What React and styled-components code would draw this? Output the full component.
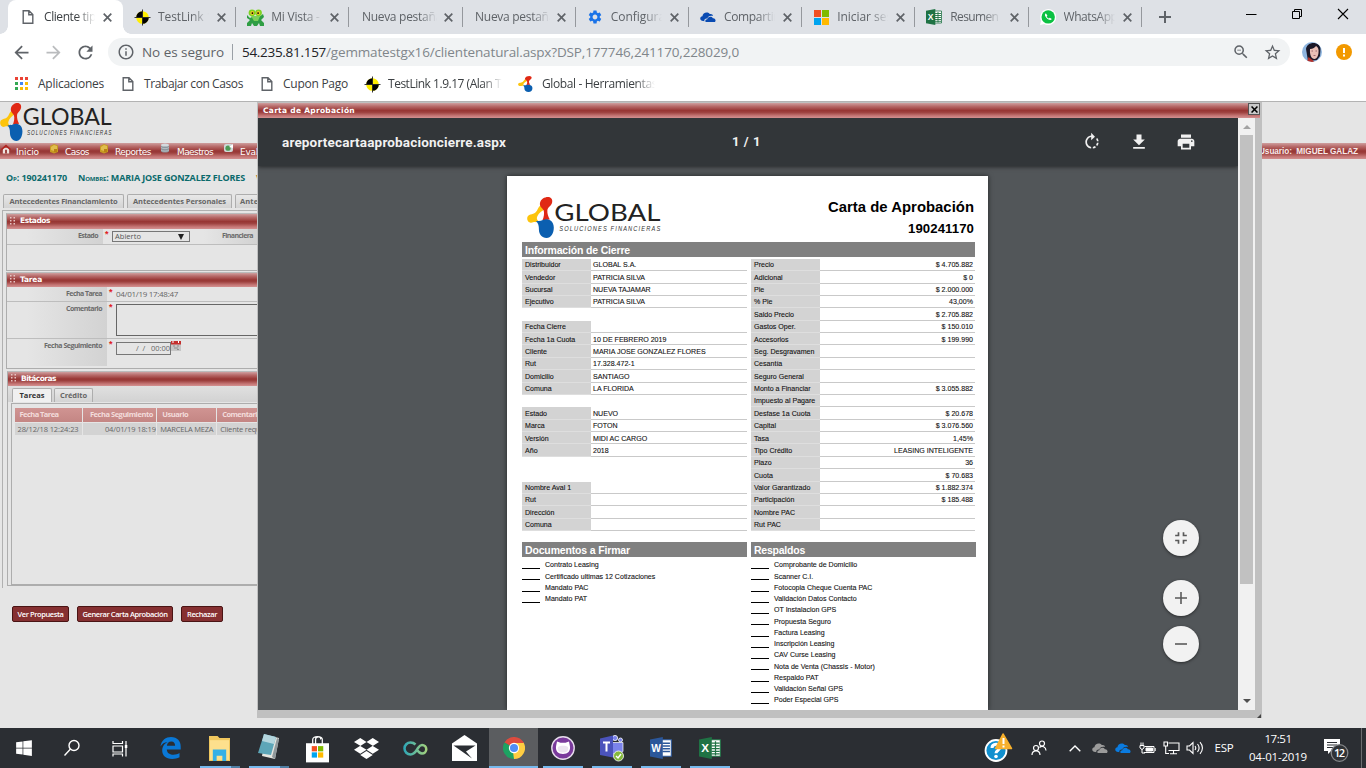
import React, { useLayoutEffect, useRef, useState } from "react";
import styled, { createGlobalStyle, css } from "styled-components";
import {
  MdArrowBack, MdArrowForward, MdRefresh, MdInfoOutline, MdZoomOut, MdStarBorder,
  MdRotateRight, MdPrint, MdFileDownload, MdFullscreenExit, MdSettings,
} from "react-icons/md";
import { FaDropbox, FaWindows } from "react-icons/fa";

const Global = createGlobalStyle`
  * { box-sizing: border-box; }
  body { margin: 0; overflow: hidden; font-family: "Open Sans", "Noto Sans", sans-serif; }
  svg { display: block; flex: none; }
`;

const ui = '"Open Sans", "Noto Sans", sans-serif';
const verdana = '"DejaVu Sans", sans-serif';
const arial = '"Liberation Sans", sans-serif';

const TextSpan = styled.span`
  display: inline-block;
  flex: none;
  white-space: pre;
  font-family: ${(p) => p.$font || ui};
  font-size: ${(p) => p.$size}px;
  font-weight: ${(p) => p.$weight || 400};
  color: ${(p) => p.$color || "#3c4043"};
  line-height: 1.2;
  ${(p) => p.$caps && css`font-variant: small-caps;`}
  ${(p) => p.$ink && css`-webkit-text-stroke: ${p.$ink}px currentColor;`}
`;

/* Text whose tracking is adjusted so that it spans a given width. */
function Text({ w, size = 12, weight, color, font, caps, ink, children }) {
  const ref = useRef(null);
  const [track, setTrack] = useState(0);
  useLayoutEffect(() => {
    if (!w) return;
    const natural = ref.current.getBoundingClientRect().width;
    setTrack((w - natural) / String(children).length);
  }, []);
  return (
    <TextSpan ref={ref} $size={size} $weight={weight} $color={color} $font={font} $caps={caps} $ink={ink}
      style={track ? { letterSpacing: track } : undefined}>
      {children}
    </TextSpan>
  );
}

const Screen = styled.div`
  width: 1366px; height: 768px; overflow: hidden;
  display: flex; flex-direction: column; background: #fff;
`;

/* ---------- browser chrome ---------- */
const TabStrip = styled.div`
  height: 34px; flex: none; display: flex; background: #dee1e6; padding-left: 8px;
`;
const Tab = styled.div`
  width: ${(p) => (p.$active ? 115 : 113.2)}px; flex: none; height: 34px;
  display: flex; align-items: center; padding-left: ${(p) => (p.$active ? 12 : 11)}px;
  background: ${(p) => (p.$active ? "#fff" : "transparent")};
  border-radius: 8px 8px 0 0; position: relative;
  &::before {
    content: ""; display: ${(p) => (p.$active ? "block" : "none")};
    position: absolute; left: -8px; bottom: 0; width: 8px; height: 8px;
    background: radial-gradient(circle at 0 0, #dee1e6 7.5px, #fff 8px);
  }
  &::after {
    content: ""; position: absolute;
    ${(p) => p.$active
      ? css`right: -8px; bottom: 0; width: 8px; height: 8px; background: radial-gradient(circle at 100% 0, #dee1e6 7.5px, #fff 8px);`
      : css`right: 0; top: 7px; width: 1px; height: 20px; background: #95989d;`}
  }
`;
const TabIcon = styled.div`width: 16px; margin-right: 8px; display: flex; justify-content: center;`;
const TabTitle = styled.div`
  width: ${(p) => (p.$wide ? 75 : 51)}px; overflow: hidden; display: flex;
  margin-left: ${(p) => (p.$wide ? 1.5 : 0)}px;
  mask-image: linear-gradient(90deg, #000 calc(100% - 18px), transparent);
`;
const TabClose = styled.div`flex: 1; display: flex; justify-content: flex-end; padding-right: ${(p) => (p.$active ? 11 : 10)}px;`;
const NewTab = styled.div`width: 47px; display: flex; align-items: center; justify-content: center;`;
const WindowButtons = styled.div`flex: 1; display: flex; justify-content: flex-end; padding: 8px 17px 0 0; gap: 34px;`;

const Toolbar = styled.div`height: 36px; flex: none; display: flex; align-items: center; color: #5f6368;`;
const NavButtons = styled.div`width: 108px; display: flex; padding-left: 11px; gap: 11px;`;
const AddressBar = styled.div`
  width: 1182px; height: 28px; border-radius: 14px; background: #f1f3f4;
  display: flex; align-items: center; padding: 0 8px 0 9px;
`;
const SiteInfo = styled.div`width: 25px; flex: none;`;
const Divider = styled.div`width: 1px; height: 16px; background: #9aa0a6; margin: 0 9px 0 8px;`;
const AddressTools = styled.div`flex: 1; display: flex; justify-content: flex-end; align-items: center; gap: 13px;`;
const Avatar = styled.div`margin-left: 12px; margin-right: 14px;`;

const Bookmarks = styled.div`height: 31px; flex: none; display: flex; align-items: center; padding: 0 0 3px 15px;`;
const Bookmark = styled.div`
  display: flex; align-items: center; width: ${(p) => p.$w}px; flex: none;
`;
const BookmarkIcon = styled.div`width: ${(p) => p.$w || 22}px; flex: none;`;
const Fade = styled.div`display: flex; overflow: hidden; width: ${(p) => p.$w}px; mask-image: linear-gradient(90deg, #000 calc(100% - 20px), transparent);`;

/* ---------- web page ---------- */
const redBar = css`background: linear-gradient(#cf9f9f 0%, #b76a69 22%, #983634 50%, #9d403e 62%, #c57675 85%, #d39090 100%);`;

const Page = styled.div`
  height: 627px; flex: none; display: flex; background: #e5e5e5; border-top: 1px solid #b3b3b3;
`;
const AppPane = styled.div`width: 257px; flex: none; overflow: hidden; display: flex; flex-direction: column;`;
const LogoRow = styled.div`height: 41px; flex: none; padding-top: 1px;`;
const MenuBar = styled.div`
  ${redBar} height: 16px; flex: none; display: flex; align-items: center; padding-left: 1px;
`;
const MenuItem = styled.div`
  width: ${(p) => p.$w}px; flex: none; height: 16px; display: flex; align-items: flex-start; gap: ${(p) => p.$gap || 5}px;
  & > span { margin-top: 4px; }
`;
const CaseLine = styled.div`height: 33px; flex: none; display: flex; align-items: center; gap: 11px; padding: 6px 0 0 6px;`;
const AppTabs = styled.div`height: 18px; flex: none; display: flex; gap: 3px; padding: 2px 0 0 3px; align-items: flex-start;`;
const AppTab = styled.div`
  height: 14px; width: ${(p) => p.$w}px; flex: none; display: flex; align-items: center; justify-content: center;
  border: 1px solid #adadad; border-bottom: 0; border-radius: 2px 2px 0 0;
  background: ${(p) => (p.$on ? "#f0f0f0" : "linear-gradient(#e8e8e8, #d3d3d3)")};
  ${(p) => p.$left && css`justify-content: flex-start; padding-left: 4px;`}
`;
const TabBody = styled.div`
  margin-left: 2px; height: 378px; flex: none; border-left: 1px solid #b0b0b0; border-top: 1px solid #b0b0b0; padding: 2px 0 0 3px;
`;
const Panel = styled.div`
  height: ${(p) => p.$h}px; border-left: 1px solid #adadad; border-top: 1px solid #bbb; border-bottom: 1px solid #adadad;
  margin-bottom: ${(p) => p.$mb}px; margin-left: ${(p) => p.$ml || 0}px;
`;
const PanelHead = styled.div`${redBar} height: ${(p) => p.$h || 15}px; display: flex; align-items: center; padding: 0 0 2px 3px; gap: 5px;`;
const FormRow = styled.div`height: ${(p) => p.$h}px; display: flex; border-bottom: 1px solid ${(p) => (p.$last ? "transparent" : "#bdbdbd")};`;
const FormLabel = styled.div`
  width: ${(p) => p.$w || 100}px; flex: none; display: flex; justify-content: flex-end; align-items: flex-start;
  padding: 3px 5px 0 0; background: linear-gradient(90deg, #e5e5e5 20%, #d2d2d2); margin-right: 2px;
`;
const Star = styled.div`width: 7px; flex: none; color: #e02020; font: bold 9px ${arial}; line-height: 10px;`;
const SelectBox = styled.div`
  width: 78px; height: 11px; flex: none; margin-top: 2px; border: 1px solid #777; display: flex; align-items: center; justify-content: space-between; padding: 0 5px 0 2px;
`;
const ReadOnly = styled.div`display: flex; align-items: flex-start; padding-top: 2px;`;
const TextArea = styled.div`width: 150px; height: 32px; border: 1px solid #666; margin-top: 2px; flex: none;`;
const DateBox = styled.div`width: 55px; height: 13px; flex: none; border: 1px solid #777; margin-top: 3px; display: flex; justify-content: flex-end; align-items: center;`;
const CalendarButton = styled.div`padding-top: 2px;`;
const InnerTabs = styled.div`height: 16px; display: flex; gap: 2px; padding: 2px 0 0 4px; background: linear-gradient(#e0e0e0,#d2d2d2);`;
const GridBox = styled.div`margin: 1px 0 0 3px; height: 182px; border: 1px solid #adadad; border-right: 0; padding: 4px 0 0 2.5px; width: 250px;`;
const GridRow = styled.div`display: flex; gap: 1.4px; margin-bottom: 1.5px;`;
const GridCell = styled.div`
  width: ${(p) => p.$w}px; flex: none; height: ${(p) => (p.$head ? 13.5 : 12)}px; display: flex; align-items: center; overflow: hidden;
  justify-content: ${(p) => (p.$right ? "flex-end" : "flex-start")};
  padding: 0 ${(p) => (p.$right && p.$head ? 3 : 0)}px 0 ${(p) => (p.$right ? 0 : p.$head ? 5 : 3)}px;
  background: ${(p) => (p.$head ? "linear-gradient(#d09492,#c48684)" : "#d3d3d3")};
`;
const Actions = styled.div`display: flex; gap: 8px; padding: 18px 0 0 12px;`;
const ActionButton = styled.div`
  width: ${(p) => p.$w}px; height: 16px; flex: none; display: flex; align-items: center; justify-content: center;
  background: #863031; border: 1px solid #4a1414; border-radius: 2px;
`;

/* ---------- modal ---------- */
const Modal = styled.div`
  width: 1005px; height: 616px; flex: none; background: #c0c0c0; padding: 1px 0 0 1px; display: flex; flex-direction: column;
`;
const ModalTitle = styled.div`${redBar} height: 15px; flex: none; width: 1002px; display: flex; align-items: flex-start; justify-content: space-between; padding: 0 0 0 5px; & > span { margin-top: 2.5px; }`;
const CloseBox = styled.div`width: 12px; height: 12px; background: #c9c9c9; border: 1px solid #555; color: #000; display: flex; align-items: center; justify-content: center;`;
const ModalBody = styled.div`height: 592px; flex: none; display: flex;`;
const Viewer = styled.div`width: 980px; height: 592px; background: #525659; display: flex; flex-direction: column; position: relative; overflow: hidden;`;
const PdfBar = styled.div`
  height: 48px; flex: none; background: #323639; color: #f1f1f1; display: flex; align-items: center; padding: 0 42px 0 24px;
  box-shadow: 0 1px 4px rgba(0,0,0,.55);
`;
const PdfTitle = styled.div`width: 450px; display: flex;`;
const PdfTools = styled.div`flex: 1; display: flex; justify-content: flex-end; gap: 27px;`;
const ZoomButtons = styled.div`position: absolute; left: 905px; top: 402px; display: flex; flex-direction: column;`;
const RoundButton = styled.div`
  width: 36px; height: 36px; border-radius: 50%; background: #f2f2f2; color: #5a5a5a; display: flex; align-items: center; justify-content: center;
  margin-bottom: ${(p) => p.$mb || 0}px; box-shadow: 0 1px 3px rgba(0,0,0,.5);
`;
const ScrollTrack = styled.div`width: 17px; background: #f1f1f1; display: flex; flex-direction: column; align-items: center; justify-content: space-between; padding: 7px 0 7px;`;
const ScrollThumb = styled.div`width: 13px; height: 449px; background: #c1c1c1; margin-bottom: auto; margin-top: 6px;`;
const ModalFoot = styled.div`flex: 1; display: flex; justify-content: flex-end; align-items: flex-end; padding-right: 1px;`;

/* ---------- PDF sheet ---------- */
const Sheet = styled.div`
  width: 481px; height: 534px; flex: none; margin: 10px 0 0 249px; background: #fff; box-shadow: 0 0 5px rgba(0,0,0,.6);
  padding: 0 12px 0 15px; overflow: hidden;
`;
const SheetHead = styled.div`height: 66px; display: flex; justify-content: space-between; padding: 21px 2px 0 5px;`;
const SheetTitles = styled.div`display: flex; flex-direction: column; align-items: flex-end; gap: 4.5px; padding-top: 2px;`;
const Bar = styled.div`width: ${(p) => p.$w}px; height: 15px; background: #808080; display: flex; align-items: center; padding: 1px 0 0 3px; flex: none;`;
const Columns = styled.div`display: flex; gap: 4px;`;
const Table = styled.div`width: ${(p) => p.$w}px; padding-top: 1.8px;`;
const Row = styled.div`height: 12.38px; display: flex; visibility: ${(p) => (p.$blank ? "hidden" : "visible")};`;
const Label = styled.div`width: 69px; background: #d3d3d3; border-bottom: 1px solid #dedede; padding: 2px 0 0 3px; display: flex; align-items: center;`;
const Value = styled.div`
  flex: 1; border-bottom: 1px solid #c9c9c9; display: flex; align-items: center; padding: 2px 2px 0;
  justify-content: ${(p) => (p.$right ? "flex-end" : "flex-start")};
`;
const Lists = styled.div`display: flex; gap: 4px; margin-top: 11px;`;
const ListItem = styled.div`height: 11.26px; display: flex; align-items: center; gap: 5px;`;
const ListItems = styled.div`padding-top: 3px;`;
const Blank = styled.div`width: 18px; height: 1px; background: #000; margin-top: 6px;`;

const RightPane = styled.div`width: 104px; flex: none; padding-top: 41px;`;
const UserBar = styled.div`${redBar} height: 16px; display: flex; align-items: center; justify-content: flex-end; padding: 2px 8px 0 0; overflow: hidden;`;

/* ---------- task bar ---------- */
const TaskBar = styled.div`height: 40px; flex: none; background: #2b2e33; display: flex; color: #fff;`;
const Launchers = styled.div`display: flex; width: 978px;`;
const Launcher = styled.div`
  width: ${(p) => p.$w || 49}px; flex: none; height: 40px; display: flex; align-items: center; justify-content: center; position: relative;
  margin-left: ${(p) => p.$ml || 0}px;
  background: ${(p) => (p.$active ? "#5b5d60" : "transparent")};
  &::after { content: ""; display: ${(p) => (p.$run ? "block" : "none")}; position: absolute; bottom: 0; left: ${(p) => (p.$active ? 0 : 4.5)}px; right: ${(p) => (p.$active ? 0 : 4.5)}px; height: 2px;
    background: ${(p) => (p.$multi ? "linear-gradient(90deg,#76b9ed 78%,#4f7ea3 78%)" : "#76b9ed")}; }
`;
const TrayItem = styled.div`width: ${(p) => p.$w}px; flex: none; display: flex; align-items: center; justify-content: center;`;
const Clock = styled.div`width: 74px; flex: none; display: flex; flex-direction: column; align-items: center; justify-content: center; gap: 4px; padding-bottom: 1px;`;
const DesktopEdge = styled.div`width: 1px; background: #6b6d70; margin-left: auto; margin-right: 4px;`;

/* ---------- drawings ---------- */
const FileIcon = () => (
  <svg width="12" height="14" viewBox="0 0 12 14" fill="none" stroke="#5f6368" strokeWidth="1.4"><path d="M1.2.8H7l3.8 3.8v8.6H1.2zM6.8.8v4h4" /></svg>
);
const TargetIcon = () => (
  <svg width="17" height="17" viewBox="0 0 17 17">
    <circle cx="8.5" cy="8.5" r="6.3" fill="#ffee00" />
    <path d="M8.5 8.5V2.2A6.3 6.3 0 0 0 2.2 8.5zM8.5 8.5v6.3a6.3 6.3 0 0 0 6.3-6.3z" fill="#000" />
    <path d="M8.5 .5v16M.5 8.5h16" stroke="#222" strokeWidth=".9" />
  </svg>
);
const FrogIcon = () => (
  <svg width="17" height="17" viewBox="0 0 17 17">
    <path d="M0 6l3 3 2-1h7l4-3 1 3-3 3 3 3v3h-4l-1-3-2 3H7l-2-3-1 3H0v-3l3-3-3-2z" fill="#2f9e44" />
    <path d="M4 7h9l-2 5H7z" fill="#7ccf5a" />
    <circle cx="5" cy="3.8" r="3.4" fill="#7ed321" /><circle cx="11.5" cy="3.8" r="3.4" fill="#7ed321" />
    <circle cx="5.2" cy="4" r="1.9" fill="#f5c623" /><circle cx="11.3" cy="4" r="1.9" fill="#f5c623" />
    <circle cx="5.4" cy="4.1" r=".9" /><circle cx="11.1" cy="4.1" r=".9" />
  </svg>
);
const CloudIcon = ({ color, w = 16 }) => (
  <svg width={w} height={w * 0.66} viewBox="0 0 16 10.6">
    <path d="M1.8 8.8C-.6 7.7-.2 4.6 2.4 4.3 2.6 1 7.2-1 9.8 2c2-.4 3 .6 3.3 2-3-1-5.4.6-5.7 2.500C4.800 6 3.800 8 4.500 9.400z" fill={color} />
    <path d="M6.4 10.400c-1.700-.5-1.500-3.100.9-3.200.3-2.700 4.300-3.400 5.600-.9 2.600-.4 3.700 2.900 1.600 4.100z" fill={color} />
  </svg>
);
const Squares = ({ s = 15 }) => (
  <svg width={s} height={s} viewBox="0 0 15 15"><path d="M0 0h7v7H0z" fill="#f25022" /><path d="M8 0h7v7H8z" fill="#7fba00" /><path d="M0 8h7v7H0z" fill="#00a4ef" /><path d="M8 8h7v7H8z" fill="#ffb900" /></svg>
);
const OfficeIcon = ({ letter, color, w = 16, grid }) => (
  <svg width={w} height={w} viewBox="0 0 16 16">
    <path d="M8 2h7.500v12H8z" fill="#fff" stroke={color} strokeWidth=".8" />
    {grid ? <path d="M9 4.500h6M9 6.500h6M9 8.500h6M9 10.500h6M9 12.300h6M12 3v10.500" stroke={color} strokeWidth=".9" />
      : <path d="M9 4.500h5.500M9 6.500h5.500M9 8.500h5.500M9 10.500h5.500" stroke={color} strokeWidth="1" />}
    <path d="M0 1.800L9.300 0v16L0 14.200z" fill={color} />
    <text x="4.500" y="11" fontFamily="Liberation Sans" fontSize={letter === "W" ? 7.5 : 8.5} fontWeight="700" fill="#fff" textAnchor="middle">{letter}</text>
  </svg>
);
const WhatsIcon = () => (
  <svg width="16" height="16" viewBox="0 0 16 16">
    <path d="M0 16l1.200-4.200A8 8 0 1 1 4.300 15z" fill="#fff" />
    <circle cx="8.200" cy="7.900" r="6.700" fill="#0cc143" />
    <path d="M5.800 4.300c-1.600 1-.8 3.200 1 5 1.800 1.700 4 2.500 5 .8l-2-1.300-.9.8c-1-.4-1.800-1.200-2.200-2.200l.7-.9z" fill="#fff" />
  </svg>
);
const Molecule = () => (
  <g>
    <path d="M0.200 21C.5 17 6 17.800 8.500 15.500 11 13 11 10.500 13.500 8.500l4 4C14.500 14 11 17 10 20.500c-.3 1.500.3 2.500 1.500 3.500l-2.500 1.300c-2-.8-3.500 1-6 .3C1 25 0 23 .2 21z" fill="#fdc40c" />
    <path d="M13 6.500C13.500 2 18 0 21 0c3.500 0 5 2.500 4.300 5.500-.7 3.500-4.500 4.500-4.800 8-.2 3 .8 6 2.500 9l-7.500.8c1.500-3 2.200-7 1.300-9.800C16 11 12.700 10.500 13 6.500z" fill="#e02814" />
    <path d="M9 24.300c2-.8 4 .2 7-1.300 3.500-1.800 11-.5 11 7.500 0 6-3 10.500-7.300 10.500-4.700 0-7.700-4-7.700-8.500 0-3.500-.5-6.500-3-8.200z" fill="#0b5fb0" />
  </g>
);
const GlobalLogo = ({ w, h }) => (
  <svg width={w} height={h} viewBox="0 0 136 41" preserveAspectRatio="none">
    <Molecule />
    <text x="27.500" y="23.500" fontFamily="Lato" fontSize="24" fontWeight="400" fill="#222" textLength="107" lengthAdjust="spacingAndGlyphs">GLOBAL</text>
    <text transform="translate(32.500 34) scale(.82 1)" fontFamily="Liberation Sans" fontStyle="italic" fontSize="7" fill="#333" textLength="124" lengthAdjust="spacing">SOLUCIONES FINANCIERAS</text>
  </svg>
);
const Cross = ({ s = 9, color = "#5f6368", sw = 1.7 }) => (
  <svg width={s} height={s} viewBox="0 0 9 9" stroke={color} strokeWidth={sw}><path d="M.7.7l7.600 7.600M8.300.7L.7 8.300" /></svg>
);
const AppsGrid = () => {
  const c = ["#ea4335", "#ea4335", "#ea4335", "#34a853", "#4285f4", "#fbbc05", "#34a853", "#fbbc05", "#fbbc05"];
  return <svg width="13" height="13" viewBox="0 0 13 13">{c.map((f, i) => <rect key={i} x={(i % 3) * 5} y={Math.floor(i / 3) * 5} width="3" height="3" fill={f} />)}</svg>;
};
const AvatarIcon = () => (
  <svg width="20" height="20" viewBox="0 0 20 20">
    <clipPath id="av"><circle cx="10" cy="10" r="10" /></clipPath>
    <g clipPath="url(#av)">
      <path d="M0 0h20v20H0z" fill="#8fb6e0" /><path d="M4 7c1-8 14-8 14.500 0l-.5 7-3 4-9 1z" fill="#1b1828" />
      <path d="M8 7c3 0 5-2 6-3 2 1 3 3 2.500 7-.3 3-2 6-4 6-3 0-5-4-4.500-10z" fill="#e9bfb6" /><path d="M5 20l1.500-5 4 3 2 2z" fill="#b5302a" />
      <path d="M9.500 9h1.500M13.500 9h1.500M11.500 13.500h2" stroke="#8a5560" strokeWidth=".8" />
    </g>
  </svg>
);
const AlertIcon = () => (
  <svg width="16" height="16" viewBox="0 0 16 16"><circle cx="8" cy="8" r="8" fill="#f29900" /><path d="M7 4h2v5H7zM7 10.500h2v2H7z" fill="#fff" /></svg>
);
const Grip = () => (
  <svg width="5" height="8" viewBox="0 0 5 8" fill="#e6c4c3"><path d="M0 0h1.500v1.500H0zM3.500 0H5v1.500H3.500zM0 3h1.500v1.500H0zM3.500 3H5v1.500H3.500zM0 6h1.500v1.500H0zM3.500 6H5v1.500H3.500z" /></svg>
);
const HomeIcon = () => (
  <svg width="10" height="11" viewBox="0 0 11 11"><path d="M2 5h7v6H2z" fill="#eee3df" /><path d="M0 6l5.500-5L11 6l-1 1.500-4.500-4L1 7.500z" fill="#b1231e" /><path d="M4.500 7h2v4h-2z" fill="#963634" /></svg>
);
const FolderIcon = () => (
  <svg width="10" height="11" viewBox="0 0 10 11"><path d="M1 3l4-2 4 1.500V9l-4 1.500L1 9z" fill="#c79a22" /><path d="M2 4l3-2 3 1v4L5 8 2 7z" fill="#e0bd4e" /><path d="M5 6h3v3H5z" fill="#b98214" /></svg>
);
const DbIcon = () => (
  <svg width="8" height="10" viewBox="0 0 8 10"><path d="M0 2v6c0 2 8 2 8 0V2z" fill="#8d979e" /><ellipse cx="4" cy="2" rx="4" ry="1.600" fill="#d5dade" /><path d="M0 4.500c1 1.500 7 1.500 8 0M0 7c1 1.500 7 1.500 8 0" stroke="#c9ced2" fill="none" strokeWidth=".7" /></svg>
);
const EvalIcon = () => (
  <svg width="10" height="10" viewBox="0 0 10 10"><rect y="1" width="9" height="8" rx="2" fill="#cfd8d8" /><circle cx="4" cy="5.200" r="2.600" fill="#4c9a55" /><path d="M5 4l4-3v4z" fill="#fff" /></svg>
);
const CalendarIcon = () => (
  <svg width="10" height="10" viewBox="0 0 10 10"><path d="M0 0h10v10H0z" fill="#c6c6c6" /><path d="M0 0h10v3.500H0z" fill="#c4302e" /><path d="M2 0v2M7.500 0v2" stroke="#fff" /><path d="M2 5h2M6 5h2M3 7h4M6 8.500h2" stroke="#8f8f8f" /></svg>
);

const WinSearch = () => (<svg width="18" height="18" viewBox="0 0 18 18" fill="none" stroke="#fff" strokeWidth="1.4"><circle cx="11" cy="6.500" r="5" /><path d="M7.500 10L1.500 16.500" /></svg>);
const TaskView = () => (<svg width="17" height="17" viewBox="0 0 17 17" fill="none" stroke="#fff" strokeWidth="1.2"><path d="M1 1v2.500h9.500V1M1 6h9.500v6H1zM1 16.500V14h9.500v2.500M14 1v15.500" /><path d="M12.800 5h2.500v3h-2.500z" fill="#fff" stroke="none" /></svg>);
const EdgeIcon = () => (
  <svg width="21" height="22" viewBox="0 0 21 22"><path fillRule="evenodd" d="M.5 9.500C1.300 3 6 0 11 0c6.500 0 9.700 4.300 9.700 9.500V12.500H6.800c.2 4 3.500 5.200 6.500 5.200 2.500 0 4.700-.8 6.200-1.700v4.300c-2 1.200-4.700 1.700-7.200 1.700C5.500 22 2.200 18 2.200 13.500c0-4 2.300-7 5.300-8.500C4.500 5.200 2 6.800.5 9.500zM6.900 8.800h8.200C15 6.200 14 4.500 11.300 4.500S7.200 6.300 6.900 8.800z" fill="#0a78d6" /></svg>
);
const Explorer = () => (<svg width="21" height="25" viewBox="0 0 22 24" preserveAspectRatio="none"><path d="M0 0h9l2 2h11v22H0z" fill="#f0c75e" /><path d="M1 4h20v19H1z" fill="#fde08d" /><path d="M4 13h14v11h-4v-5H8v5H4z" fill="#35b0e6" /></svg>);
const Notepad = () => (<svg width="23" height="28" viewBox="0 0 23 28"><path d="M9 1l13 3-4 21-13-3z" fill="#e6e6e0" /><path d="M7 0l12 3-5 18-13-2z" fill="#5da6b8" /><path d="M7 0l12 3-2 7L5 7z" fill="#b4d6de" /><path d="M20 4l2 1-4 20-3-2z" fill="#8f989b" /></svg>);
const Store = () => (<svg width="23" height="29" viewBox="0 0 24 29"><path d="M7 10V5c0-4 10-4 10 0v5M10 10V5c0-4 7-3 5 0" fill="none" stroke="#fff" strokeWidth="1.3" /><path d="M0 9h24v20H0z" fill="#fff" /><path d="M6 12h5.500v5.500H6z" fill="#f25022" /><path d="M12.500 12H18v5.500h-5.500z" fill="#7fba00" /><path d="M6 18.500h5.500V24H6z" fill="#00a4ef" /><path d="M12.500 18.500H18V24h-5.500z" fill="#ffb900" /></svg>);
const InfinityIcon = () => (
  <svg width="25" height="15" viewBox="0 0 25 15" fill="none">
    <defs><linearGradient id="inf" gradientUnits="userSpaceOnUse" x1="0" x2="25" y1="0" y2="0"><stop stopColor="#2aa5b8" /><stop offset="1" stopColor="#a9d47a" /></linearGradient></defs>
    <path d="M12.500 3.500C11 2 9.500 1.500 7.500 1.500a6 6 0 1 0 0 12c4.500 0 5.500-3.500 7.500-6.500C16 5.500 17 4 19 4a4 4 0 0 1 0 8.500c-2.500 0-4-2-5-4" stroke="url(#inf)" strokeWidth="2.5" />
  </svg>
);
const MailIcon = () => (<svg width="25" height="26" viewBox="0 0 25 26"><path d="M0 8.500L12.500 0 25 8.500V26H0z" fill="#fff" /><path d="M1.500 10.500h22L14 16.500l6 7z" fill="#2b2e33" /></svg>);
const Chrome = () => (
  <svg width="22" height="22" viewBox="0 0 24 24">
    <path d="M12 12L1.600 6A12 12 0 0 1 22.400 6z" fill="#dd4b3e" /><path d="M12 12L22.400 6A12 12 0 0 1 12 24z" fill="#ffcd42" /><path d="M12 12v12A12 12 0 0 1 1.600 6z" fill="#1da362" />
    <path d="M12 6.500h10.700L17 14z" fill="#ffcd42" /><path d="M12 6.500h10.700L21 4H8z" fill="#dd4b3e" /><path d="M17 14.500L12 24l-1-7z" fill="#ffcd42" />
    <circle cx="12" cy="12" r="5.600" fill="#fff" /><circle cx="12" cy="12" r="4.400" fill="#4f8df5" />
  </svg>
);
const GitCircle = () => (
  <svg width="24" height="24" viewBox="0 0 24 24"><circle cx="12" cy="12" r="11.200" fill="#7a3a9c" stroke="#e6dceb" strokeWidth="1.4" /><path d="M6 5.500l3.500 1.300h5L18 5.500l.9 4.500c.9 5-2 8-6.900 8s-7.800-3-6.900-8z" fill="#fff" /><path d="M7 11c2-1.800 8-1.800 10 0 1 3.500-1 5.500-5 5.500S6 14.500 7 11z" fill="#ece4f0" /></svg>
);
const Teams = () => (
  <svg width="26" height="30" viewBox="0 0 26 29"><circle cx="16" cy="4.500" r="2.600" fill="#7b83eb" stroke="#fff" strokeWidth=".8" /><circle cx="21.500" cy="6.500" r="2" fill="#7b83eb" stroke="#fff" strokeWidth=".8" /><path d="M13 9h11v9l-5 4-6-2z" fill="#7b83eb" stroke="#fff" strokeWidth=".7" /><path d="M1 5l13-3v22L1 21.500z" fill="#4b53bc" /><path d="M4 9h7M7.500 9v9" stroke="#fff" strokeWidth="2" /><circle cx="19.500" cy="22.500" r="5" fill="#84b93c" stroke="#fff" strokeWidth=".8" /><path d="M17 22.500l2 2 3-4" stroke="#fff" strokeWidth="1.4" fill="none" /></svg>
);
const HelpIcon = () => (
  <svg width="30" height="32" viewBox="0 0 30 32"><circle cx="13" cy="18.500" r="10.500" fill="#1190cf" stroke="#fff" strokeWidth="1.8" /><path d="M9 16c0-5 8-5 8-.8 0 3-4 3-4 6" fill="none" stroke="#fff" strokeWidth="3" /><circle cx="13" cy="24.500" r="1.800" fill="#fff" /><path d="M20 2l8.500 14.500h-16z" fill="#f7b02c" stroke="#f7b02c" strokeLinejoin="round" strokeWidth="1.5" /><path d="M20.500 6v6M20.500 13.500v2" stroke="#fff" strokeWidth="2" /></svg>
);
const People = () => (<svg width="16" height="16" viewBox="0 0 16 16" fill="none" stroke="#fff" strokeWidth="1.2"><circle cx="5" cy="8" r="2.500" /><path d="M1 15c0-5.500 8-5.500 8 0" /><circle cx="11" cy="3.500" r="2.500" /><path d="M8.500 7.500c2.500-2.500 6.500-.5 6.500 3" /></svg>);
const Battery = () => (<svg width="17" height="13" viewBox="0 0 17 13" fill="none" stroke="#fff"><path d="M5.500 4.500h9.500v6H5M1 3.500h4v2.500L3 7.500 1 6zM2 3.500v-3M4 3.500v-3M3 7v4h3" /><path d="M7 6h6.500v3H7z" fill="#fff" /><path d="M16.200 6v3" /></svg>);
const Network = () => (<svg width="17" height="14" viewBox="0 0 17 14" fill="none" stroke="#fff" strokeWidth="1.1"><path d="M5.500 2h10.500v7.500H5.500M10.500 9.500v3M7 12.700h7M1 1h3.500v4H1zM2.700 5v7.500H6" /></svg>);
const Volume = () => (<svg width="18" height="14" viewBox="0 0 18 14" fill="none" stroke="#fff" strokeWidth="1.1"><path d="M1 5h2.500L7 1.500v11L3.500 9H1zM9 5c1 1.300 1 2.700 0 4M11.500 3c2 2.500 2 5.500 0 8M14 1.200c3 3.500 3 8 0 11.600" /></svg>);
const Notice = () => (
  <svg width="28" height="28" viewBox="0 0 28 28"><path d="M1 5h16v12H8l-3 3v-3H1z" fill="#fff" /><path d="M4 8.500h10M4 11h10M4 13.500h6" stroke="#2b2e33" /><circle cx="16.500" cy="19" r="8.300" fill="#2f3236" stroke="#85878a" strokeWidth="1.3" /><text x="16.500" y="23" fill="#fff" fontSize="11" fontWeight="600" fontFamily="Open Sans" textAnchor="middle" textLength="11">12</text></svg>
);

/* ---------- data ---------- */
const tabs = [
  { icon: <TargetIcon />, title: "TestLink 1.9", w: 65 },
  { icon: <FrogIcon />, title: "Mi Vista - M", w: 62 },
  { title: "Nueva pestaña", w: 80 },
  { title: "Nueva pestaña", w: 80 },
  { icon: <MdSettings size={16} color="#1a73e8" />, title: "Configurac", w: 60 },
  { icon: <CloudIcon color="#094ab2" />, title: "Compartir", w: 54 },
  { icon: <Squares />, title: "Iniciar sesi", w: 58 },
  { icon: <OfficeIcon letter="X" color="#1f7244" grid />, title: "Resumen", w: 48 },
  { icon: <WhatsIcon />, title: "WhatsApp", w: 54 },
];
const leftRows = [
  ["Distribuidor", "GLOBAL S.A."], ["Vendedor", "PATRICIA SILVA"], ["Sucursal", "NUEVA TAJAMAR"], ["Ejecutivo", "PATRICIA SILVA"], null,
  ["Fecha Cierre", ""], ["Fecha 1a Cuota", "10 DE FEBRERO 2019"], ["Cliente", "MARIA JOSE GONZALEZ FLORES"], ["Rut", "17.328.472-1"],
  ["Domicilio", "SANTIAGO"], ["Comuna", "LA FLORIDA"], null, ["Estado", "NUEVO"], ["Marca", "FOTON"], ["Versión", "MIDI AC CARGO"], ["Año", "2018"],
  null, null, ["Nombre Aval 1", ""], ["Rut", ""], ["Dirección", ""], ["Comuna", ""],
];
const rightRows = [
  ["Precio", "$ 4.705.882"], ["Adicional", "$ 0"], ["Pie", "$ 2.000.000"], ["% Pie", "43,00%"], ["Saldo Precio", "$ 2.705.882"], ["Gastos Oper.", "$ 150.010"],
  ["Accesorios", "$ 199.990"], ["Seg. Desgravamen", ""], ["Cesantía", ""], ["Seguro General", ""], ["Monto a Financiar", "$ 3.055.882"], ["Impuesto al Pagare", ""],
  ["Desfase 1a Cuota", "$ 20.678"], ["Capital", "$ 3.076.560"], ["Tasa", "1,45%"], ["Tipo Crédito", "LEASING INTELIGENTE"], ["Plazo", "36"], ["Cuota", "$ 70.683"],
  ["Valor Garantizado", "$ 1.882.374"], ["Participación", "$ 185.488"], ["Nombre PAC", ""], ["Rut PAC", ""],
];
const toSign = ["Contrato Leasing", "Certificado ultimas 12 Cotizaciones", "Mandato PAC", "Mandato PAT"];
const backups = [
  "Comprobante de Domicilio", "Scanner C.I.", "Fotocopia Cheque Cuenta PAC", "Validación Datos Contacto", "OT Instalacion GPS", "Propuesta Seguro",
  "Factura Leasing", "Inscripción Leasing", "CAV Curse Leasing", "Nota de Venta (Chassis - Motor)", "Respaldo PAT", "Validación Señal GPS", "Poder Especial GPS",
];

const Small = (p) => <Text size={7.07} font={arial} color="#111" ink={0.1} {...p} />;

function DataTable({ rows, w, right }) {
  return (
    <Table $w={w}>
      {rows.map((r, i) => (
        <Row key={i} $blank={!r}>
          <Label><Small>{r ? r[0] : ""}</Small></Label>
          <Value $right={right}><Small>{r ? r[1] : ""}</Small></Value>
        </Row>
      ))}
    </Table>
  );
}
function CheckList({ title, w, items }) {
  return (
    <div>
      <Bar $w={225}><Text size={10.5} w={w} weight={700} font={arial} color="#fff">{title}</Text></Bar>
      <ListItems>{items.map((t) => <ListItem key={t}><Blank /><Small>{t}</Small></ListItem>)}</ListItems>
    </div>
  );
}
const HeadText = ({ w, children }) => <Text size={7.5} w={w} weight={700} font={verdana} color="#fff">{children}</Text>;
const Lab = ({ w, children }) => <Text size={7} w={w} weight={700} color="#6b6b6b">{children}</Text>;
const MenuText = ({ w, children }) => <Text size={9} w={w} font={verdana} color="#fff">{children}</Text>;
const Req = () => <Star>*</Star>;

export default function App() {
  return (
    <Screen>
      <Global />
      <TabStrip>
        <Tab $active>
          <TabIcon><FileIcon /></TabIcon>
          <TabTitle><Text w={70}>Cliente tipo N</Text></TabTitle>
          <TabClose $active><Cross /></TabClose>
        </Tab>
        {tabs.map((t, i) => (
          <Tab key={i}>
            {t.icon && <TabIcon>{t.icon}</TabIcon>}
            <TabTitle $wide={!t.icon}><Text w={t.w} color="#5f6368">{t.title}</Text></TabTitle>
            <TabClose><Cross /></TabClose>
          </Tab>
        ))}
        <NewTab><svg width="12" height="12" viewBox="0 0 12 12" stroke="#5f6368" strokeWidth="2"><path d="M6 0v12M0 6h12" /></svg></NewTab>
        <WindowButtons>
          <svg width="11" height="12" viewBox="0 0 11 12" stroke="#000"><path d="M0 6.500h10.500" /></svg>
          <svg width="12" height="12" viewBox="0 0 12 12" fill="none" stroke="#000"><path d="M1.500 3.500h7v7h-7zM3.500 3.500v-2h7v7h-2" /></svg>
          <svg width="12" height="12" viewBox="0 0 12 12" stroke="#000" strokeWidth="1.1"><path d="M1 1l10 10M11 1L1 11" /></svg>
        </WindowButtons>
      </TabStrip>
      <Toolbar>
        <NavButtons><MdArrowBack size={21} /><MdArrowForward size={21} color="#babcbe" /><MdRefresh size={21} /></NavButtons>
        <AddressBar>
          <SiteInfo><MdInfoOutline size={18} /></SiteInfo>
          <Text size={13.5} w={82} color="#5f6368">No es seguro</Text>
          <Divider />
          <Text size={13.5} w={84} color="#202124">54.235.81.157</Text>
          <Text size={13.5} w={413} color="#80868b">/gemmatestgx16/clientenatural.aspx?DSP,177746,241170,228029,0</Text>
          <AddressTools><MdZoomOut size={18} /><MdStarBorder size={19} /></AddressTools>
        </AddressBar>
        <Avatar><AvatarIcon /></Avatar>
        <AlertIcon />
      </Toolbar>
      <Bookmarks>
        <Bookmark $w={107}><BookmarkIcon $w={23}><AppsGrid /></BookmarkIcon><Text w={66}>Aplicaciones</Text></Bookmark>
        <Bookmark $w={139}><BookmarkIcon><FileIcon /></BookmarkIcon><Text w={99}>Trabajar con Casos</Text></Bookmark>
        <Bookmark $w={103}><BookmarkIcon><FileIcon /></BookmarkIcon><Text w={65}>Cupon Pago</Text></Bookmark>
        <Bookmark $w={154}><BookmarkIcon $w={24}><TargetIcon /></BookmarkIcon><Fade $w={114}><Text w={120}>TestLink 1.9.17 (Alan Tu</Text></Fade></Bookmark>
        <Bookmark $w={150}><BookmarkIcon $w={24}><svg width="15" height="16" viewBox="0 0 28 41" preserveAspectRatio="none"><Molecule /></svg></BookmarkIcon><Fade $w={113}><Text w={115}>Global - Herramientas</Text></Fade></Bookmark>
      </Bookmarks>

      <Page>
        <AppPane>
          <LogoRow><GlobalLogo w={113} h={38} /></LogoRow>
          <MenuBar>
            <MenuItem $w={48}><HomeIcon /><MenuText w={23}>Inicio</MenuText></MenuItem>
            <MenuItem $w={50} $gap={6}><FolderIcon /><MenuText w={24}>Casos</MenuText></MenuItem>
            <MenuItem $w={62} $gap={6}><FolderIcon /><MenuText w={36}>Reportes</MenuText></MenuItem>
            <MenuItem $w={63} $gap={8}><DbIcon /><MenuText w={36}>Maestros</MenuText></MenuItem>
            <MenuItem $w={80} $gap={6}><EvalIcon /><MenuText w={46}>Evaluación</MenuText></MenuItem>
          </MenuBar>
          <CaseLine>
            <Text size={9} w={61} weight={700} color="#0a6a6c" caps>Op: 190241170</Text>
            <Text size={9} w={167} weight={700} color="#0a6a6c" caps>Nombre: MARIA JOSE GONZALEZ FLORES</Text>
            <Text size={9} weight={700} color="#b8863c">V</Text>
          </CaseLine>
          <AppTabs>
            <AppTab $w={121}><Text size={7.5} w={108} weight={700} color="#666">Antecedentes Financiamiento</Text></AppTab>
            <AppTab $w={105}><Text size={7.5} w={93} weight={700} color="#666">Antecedentes Personales</Text></AppTab>
            <AppTab $w={90} $left><Text size={7.5} w={53} weight={700} color="#666">Antecedentes</Text></AppTab>
          </AppTabs>
          <TabBody>
            <Panel $h={58} $mb={1}>
              <PanelHead><Grip /><HeadText w={30}>Estados</HeadText></PanelHead>
              <FormRow $h={16}>
                <FormLabel $w={96}><Lab w={20}>Estado</Lab></FormLabel><Req />
                <SelectBox>
                  <Text size={7.5} w={26} color="#555">Abierto</Text>
                  <svg width="6" height="6" viewBox="0 0 6 6"><path d="M0 0h6L3 6z" fill="#222" /></svg>
                </SelectBox>
                <FormLabel $w={68}><Lab w={31}>Financiera</Lab></FormLabel>
              </FormRow>
            </Panel>
            <Panel $h={97} $mb={2}>
              <PanelHead $h={14}><Grip /><HeadText w={22}>Tarea</HeadText></PanelHead>
              <FormRow $h={15}><FormLabel><Lab w={36}>Fecha Tarea</Lab></FormLabel><Req />
                <ReadOnly><Text size={8} w={62} color="#666">04/01/19 17:48:47</Text></ReadOnly></FormRow>
              <FormRow $h={37}><FormLabel><Lab w={36}>Comentario</Lab></FormLabel><Req /><TextArea /></FormRow>
              <FormRow $h={28} $last><FormLabel><Lab w={58}>Fecha Seguimiento</Lab></FormLabel><Req />
                <DateBox><Text size={7.5} w={34} color="#666">/  /   00:00</Text></DateBox><CalendarButton><CalendarIcon /></CalendarButton></FormRow>
            </Panel>
            <Panel $h={215} $mb={0} $ml={1}>
              <PanelHead $h={14}><Grip /><HeadText w={35}>Bitácoras</HeadText></PanelHead>
              <InnerTabs>
                <AppTab $w={40} $on><Text size={7.5} w={25} weight={700} color="#333">Tareas</Text></AppTab>
                <AppTab $w={39}><Text size={7.5} w={27} weight={700} color="#666">Crédito</Text></AppTab>
              </InnerTabs>
              <GridBox>
                <GridRow>
                  <GridCell $head $w={67}><Text size={7.5} w={39} weight={700} color="#f3dcdb">Fecha Tarea</Text></GridCell>
                  <GridCell $head $right $w={73}><Text size={7.5} w={63} weight={700} color="#f3dcdb">Fecha Seguimiento</Text></GridCell>
                  <GridCell $head $w={58.5}><Text size={7.5} w={26} weight={700} color="#f3dcdb">Usuario</Text></GridCell>
                  <GridCell $head $w={70}><Text size={7.5} w={39} weight={700} color="#f3dcdb">Comentario</Text></GridCell>
                </GridRow>
                <GridRow>
                  <GridCell $w={67}><Text size={7.5} w={61} color="#666">28/12/18 12:24:23</Text></GridCell>
                  <GridCell $right $w={73}><Text size={7.5} w={51} color="#666">04/01/19 18:19</Text></GridCell>
                  <GridCell $w={58.5}><Text size={7.5} w={53} color="#666">MARCELA MEZA</Text></GridCell>
                  <GridCell $w={70}><Text size={7.5} w={53} color="#666">Cliente requiere</Text></GridCell>
                </GridRow>
              </GridBox>
            </Panel>
          </TabBody>
          <Actions>
            <ActionButton $w={57}><Text size={7.5} w={46} weight={600} color="#fff">Ver Propuesta</Text></ActionButton>
            <ActionButton $w={96}><Text size={7.5} w={85} weight={600} color="#fff">Generar Carta Aprobación</Text></ActionButton>
            <ActionButton $w={42}><Text size={7.5} w={30} weight={600} color="#fff">Rechazar</Text></ActionButton>
          </Actions>
        </AppPane>

        <Modal>
          <ModalTitle>
            <HeadText w={92}>Carta de Aprobación</HeadText>
            <CloseBox><Cross s={7} color="#000" sw={2} /></CloseBox>
          </ModalTitle>
          <ModalBody>
            <Viewer>
              <PdfBar>
                <PdfTitle><Text size={13.5} w={224} weight={700} font="Roboto, sans-serif" color="#f1f1f1">areportecartaaprobacioncierre.aspx</Text></PdfTitle>
                <Text size={13} w={29} weight={700} font="Roboto, sans-serif" color="#f1f1f1">1 / 1</Text>
                <PdfTools><MdRotateRight size={20} /><MdFileDownload size={20} /><MdPrint size={20} /></PdfTools>
              </PdfBar>
              <Sheet>
                <SheetHead>
                  <GlobalLogo w={135} h={41} />
                  <SheetTitles>
                    <Text size={14.85} w={146} weight={700} font={arial} color="#000">Carta de Aprobación</Text>
                    <Text size={13.2} w={66} weight={700} font={arial} color="#000">190241170</Text>
                  </SheetTitles>
                </SheetHead>
                <Bar $w={453}><Text size={10.5} w={105} weight={700} font={arial} color="#fff">Información de Cierre</Text></Bar>
                <Columns><DataTable rows={leftRows} w={225} /><DataTable rows={rightRows} w={224} right /></Columns>
                <Lists>
                  <CheckList title="Documentos a Firmar" w={105} items={toSign} />
                  <CheckList title="Respaldos" w={51} items={backups} />
                </Lists>
              </Sheet>
              <ZoomButtons>
                <RoundButton $mb={24}><MdFullscreenExit size={20} /></RoundButton>
                <RoundButton $mb={10}><svg width="12" height="12" viewBox="0 0 12 12" stroke="#5a5a5a" strokeWidth="1.6"><path d="M6 0v12M0 6h12" /></svg></RoundButton>
                <RoundButton><svg width="12" height="12" viewBox="0 0 12 12" stroke="#5a5a5a" strokeWidth="1.6"><path d="M0 6h12" /></svg></RoundButton>
              </ZoomButtons>
            </Viewer>
            <ScrollTrack>
              <svg width="8" height="4" viewBox="0 0 8 4"><path d="M0 4h8L4 0z" fill="#a3a3a3" /></svg>
              <ScrollThumb />
              <svg width="8" height="4" viewBox="0 0 8 4"><path d="M0 0h8L4 4z" fill="#505050" /></svg>
            </ScrollTrack>
          </ModalBody>
          <ModalFoot><svg width="4" height="4" viewBox="0 0 4 4"><path d="M4 0v4H0z" fill="#444" /></svg></ModalFoot>
        </Modal>

        <RightPane>
          <UserBar><Text size={8.2} w={99} weight={700} font={arial} color="#f8eaea">Usuario:  MIGUEL GALAZ</Text></UserBar>
        </RightPane>
      </Page>

      <TaskBar>
        <Launchers>
          <Launcher $w={48}><FaWindows size={18} /></Launcher>
          <Launcher $w={48}><WinSearch /></Launcher>
          <Launcher $w={48}><TaskView /></Launcher>
          <Launcher $ml={2}><EdgeIcon /></Launcher>
          <Launcher $run $multi><Explorer /></Launcher>
          <Launcher $run $multi><Notepad /></Launcher>
          <Launcher><Store /></Launcher>
          <Launcher><FaDropbox size={25} /></Launcher>
          <Launcher><InfinityIcon /></Launcher>
          <Launcher><MailIcon /></Launcher>
          <Launcher $run $active><Chrome /></Launcher>
          <Launcher $run><GitCircle /></Launcher>
          <Launcher $run><Teams /></Launcher>
          <Launcher $run><OfficeIcon w={22} letter="W" color="#2b579a" /></Launcher>
          <Launcher $run><OfficeIcon w={22} letter="X" color="#1f7244" grid /></Launcher>
        </Launchers>
        <TrayItem $w={39}><HelpIcon /></TrayItem>
        <TrayItem $w={44}><People /></TrayItem>
        <TrayItem $w={28}><svg width="12" height="7" viewBox="0 0 12 7" fill="none" stroke="#fff" strokeWidth="1.4"><path d="M.7 6.300L6 1l5.300 5.300" /></svg></TrayItem>
        <TrayItem $w={22}><CloudIcon color="#9b9b9b" /></TrayItem>
        <TrayItem $w={24}><CloudIcon color="#0a7be0" /></TrayItem>
        <TrayItem $w={24}><Battery /></TrayItem>
        <TrayItem $w={24}><Network /></TrayItem>
        <TrayItem $w={24}><Volume /></TrayItem>
        <TrayItem $w={34}><Text size={11.5} w={19} color="#fff">ESP</Text></TrayItem>
        <Clock>
          <Text size={11.5} w={27} color="#fff">17:51</Text>
          <Text size={11.5} w={58} color="#fff">04-01-2019</Text>
        </Clock>
        <TrayItem $w={44}><Notice /></TrayItem>
        <DesktopEdge />
      </TaskBar>
    </Screen>
  );
}
